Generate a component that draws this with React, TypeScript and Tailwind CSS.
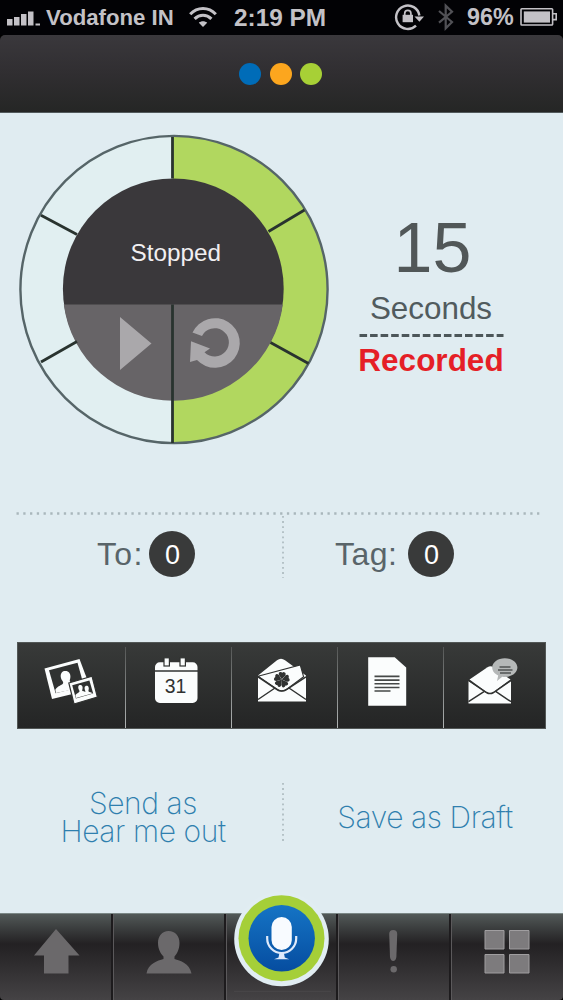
import type { ReactNode } from "react";

const FONT = "font-['Liberation_Sans',Arial,sans-serif]";
const THIN_FONT = "font-['Inter','Liberation_Sans',sans-serif] font-extralight";

export default function App() {
  return (
    <div
      className={`flex h-[1000px] w-[563px] flex-col overflow-hidden bg-black ${FONT}`}
    >
      <StatusBar />
      <Header />
      <main className="flex h-[800px] shrink-0 flex-col bg-[#e0ecf1]">
        <Recorder />
        <Recipients />
        <Attachments />
        <Actions />
      </main>
      <TabBar />
    </div>
  );
}

/* Status bar */

function StatusBar() {
  return (
    <div className="flex h-[35px] shrink-0 items-center whitespace-nowrap bg-[#020205] font-bold text-[#c3c1c6]">
      <svg className="ml-[7px] h-[35px] w-[34px]" viewBox="0 0 34 35" fill="currentColor">
        <rect x="0" y="19" width="5.5" height="6.5" />
        <rect x="7" y="17" width="5.5" height="8.5" />
        <rect x="14" y="14" width="5.5" height="11.5" />
        <rect x="21" y="11.5" width="5.5" height="14" />
        <rect x="28.5" y="23.5" width="4.5" height="2" />
      </svg>
      <span className="ml-[5px] w-[143px] text-[22.2px] leading-[35px]">Vodafone IN</span>
      <svg className="h-[35px] w-[28px]" viewBox="0 0 28 35" fill="none" stroke="currentColor" strokeWidth="3.1">
        <path d="M1.2 14.2C8.5 6.6 19.5 6.6 26.8 14.2" />
        <path d="M5.6 18.8C10.5 14 17.5 14 22.4 18.8" />
        <path d="M14 27l-4.2-4.3c2.4-2 6-2 8.4 0z" fill="currentColor" stroke="none" />
      </svg>
      <span className="ml-[17px] w-[160px] text-[24.4px] leading-[35px]">2:19 PM</span>
      <svg className="h-[35px] w-[31px]" viewBox="0 0 31 35" fill="none" stroke="currentColor" strokeWidth="2.4">
        <path d="M25.4 15.5A11.7 11.7 0 1 0 22 25.6" />
        <path d="M20.5 16.5h9.5l-4.6 5.2z" fill="currentColor" stroke="none" />
        <rect x="8.6" y="14.8" width="10.4" height="7.4" fill="currentColor" stroke="none" />
        <path d="M10.7 15.5v-2a3.1 3.1 0 0 1 6.2 0v2" strokeWidth="1.7" />
      </svg>
      <svg
        className="ml-[12px] h-[35px] w-[18px] text-[#515156]"
        viewBox="0 0 18 35"
        fill="none"
        stroke="currentColor"
        strokeWidth="2.2"
      >
        <path d="M2 11l13 11-6.3 6.3V5.7L15 11.8 2 22.6" />
      </svg>
      <span className="ml-[12px] w-[53px] text-[23.3px] leading-[35px]">96%</span>
      <svg className="h-[35px] w-[38px]" viewBox="0 0 38 35" fill="none" stroke="currentColor" strokeWidth="1.6">
        <rect x="1" y="8.8" width="31.6" height="16.2" rx="0.8" />
        <rect x="3.8" y="11.4" width="26.2" height="11.2" fill="currentColor" stroke="none" />
        <path d="M33 13.8h3.2v5.8H33" />
      </svg>
    </div>
  );
}

function Header() {
  return (
    <header className="flex h-[78px] shrink-0 items-center justify-center gap-[8.5px] rounded-t-[5px] border-b border-[#525a5c] bg-linear-to-b from-[#3a383c] via-[#302e31] to-[#252625] pr-[2px]">
      <i className="size-[22px] rounded-full bg-[#006cb8]" />
      <i className="size-[22px] rounded-full bg-[#fca61e]" />
      <i className="size-[22px] rounded-full bg-[#a7d036]" />
    </header>
  );
}

/* Dial and elapsed time */

function Recorder() {
  return (
    <section className="flex h-[398px] shrink-0 pt-3">
      <Dial />
      <div className="ml-[17px] mt-[80px] flex h-[180px] w-[148px] flex-col items-center">
        <span className="h-[84px] pl-[3px] text-[70px] leading-[86px] text-[#515758]">15</span>
        <span className="h-[38px] text-[31.4px] leading-[40px] text-[#515b5e]">Seconds</span>
        <svg className="mt-[6px] h-[5px] w-[145px]" viewBox="0 0 145 5">
          <path d="M0.5 2.5h144" stroke="#4c5659" strokeWidth="3" strokeDasharray="7.6 2.95" />
        </svg>
        <span className="text-[31.5px] leading-[44px] font-bold text-[#e51f27]">Recorded</span>
      </div>
    </section>
  );
}

function Dial() {
  return (
    <svg className="ml-[10px] size-[330px] shrink-0" viewBox="0 0 330 330">
      <circle cx="164" cy="164.5" r="153.8" fill="#e1eff1" />
      <path d="M162.5 10.7H164a153.8 153.8 0 0 1 0 307.6h-1.5z" fill="#b1d75f" />
      <circle cx="164" cy="164.5" r="153.6" fill="none" stroke="#566568" strokeWidth="2.4" />
      <circle cx="163.3" cy="163.8" r="110.4" fill="#3a383b" />
      <path d="M53.8 179.5h219a110.4 110.4 0 0 1-219 0z" fill="#676467" />
      <g stroke="#29332f" strokeWidth="2.8">
        <path d="M162.5 12v41.5M162.5 179.5v138.5" />
        <path d="M31 90.3l36 19.2M31 237l36-20.5M258.5 106.5l36-21.5M260.5 217.5l38 21" />
      </g>
      <text x="120.5" y="135.8" fontSize="24.3" fill="#f1eff1">
        Stopped
      </text>
      <path d="M110 192v53l31.5-26.5z" fill="#aaa8ab" />
      <path
        d="M182.5 207.5A24.8 24.8 0 1 1 187 235L180 237l1-20.8 19 7.4-5.5 3.6A14.2 14.2 0 1 0 192 211z"
        fill="#aaa8ab"
      />
    </svg>
  );
}

/* To / tag counters */

function Recipients() {
  return (
    <section className="flex h-[131px] shrink-0 flex-col px-4">
      <svg className="h-[5px] w-[530px] shrink-0" viewBox="0 0 530 5">
        <path d="M0.5 2.5h524" stroke="#a9b7bc" strokeWidth="2.4" strokeDasharray="2.3 4.46" />
      </svg>
      <div className="flex h-[66px]">
        <Counter label="To:" className="ml-[81px] w-[185px]" labelClass="w-[52px] tracking-[1.3px]" />
        <VerticalDots height={62} />
        <Counter label="Tag:" className="ml-[51px]" labelClass="w-[73px] tracking-[0.5px]" />
      </div>
    </section>
  );
}

function Counter({
  label,
  className,
  labelClass,
}: {
  label: string;
  className: string;
  labelClass: string;
}) {
  return (
    <div className={`flex items-center pt-[9px] ${className}`}>
      <span className={`text-[32px] leading-[46px] text-[#596469] ${labelClass}`}>{label}</span>
      <span className="flex size-[46px] items-center justify-center rounded-full bg-[#393a3a] pt-[3px] pl-px text-[27px] leading-none text-white">
        0
      </span>
    </div>
  );
}

function VerticalDots({ height }: { height: number }) {
  return (
    <svg className="w-[2px] shrink-0" height={height} viewBox={`0 0 2 ${height}`}>
      <path d={`M1 0v${height}`} stroke="#acbabf" strokeWidth="1.7" strokeDasharray="1.8 3.3" />
    </svg>
  );
}

/* Attachment toolbar */

function Attachments() {
  const icons = [PhotosIcon, CalendarIcon, CardIcon, NoteIcon, MessageIcon];
  return (
    <section className="ml-[17px] flex h-[87px] w-[529px] shrink-0 border border-[#525756] bg-linear-to-b from-[#383a39] to-[#242525]">
      {icons.map((Icon, i) => (
        <div key={i} className="flex w-[106px] shrink-0">
          <Icon />
          {i < icons.length - 1 && (
            <span className="mt-1 -mr-[2px] ml-px w-px shrink-0 bg-linear-to-b from-[#555756] to-[#b0b4b4]" />
          )}
        </div>
      ))}
    </section>
  );
}

function ToolIcon({ children }: { children: ReactNode }) {
  return (
    <svg className="h-[85px] w-[106px] shrink-0" viewBox="0 0 106 85" fill="#fbfdfd">
      {children}
    </svg>
  );
}

function PhotosIcon() {
  return (
    <ToolIcon>
      <path d="M26.5 25.4L61.5 16 73 46.4 34 56z" />
      <path d="M31 27.3L59.5 19.7 66 43.2 37.6 50.2z" fill="#303231" />
      <path d="M38 50l-.7-3.2c2.2-3.7 6.3-4.4 7.7-6.2.6-1.2-.2-2.3-1.5-4.2-1.6-3.2-.8-7.3 2.5-8.3 4-1 6.8 2 6.4 6-.1 2.1-1 3.2-.5 4.4 1 1.8 6.3 1.4 9.4 4l1 2.6z" />
      <path d="M50.8 40L74 33.2 79.4 54 56 61z" stroke="#303231" strokeWidth="1.2" />
      <path d="M54.2 42.3l17.2-4.7 3.8 12.9-17.3 5z" fill="#303231" />
      <path d="M58 55l-.6-3c1.8-2 3.6-2.5 4.1-3.5.2-1-1.8-2.7-1.2-5 .6-2 3.6-2 4.2.2.5 1.8-.6 3.3-.2 4.2 1 0 2 .5 3 1 .5-.8-1-2.5-.7-4.5.4-2 3.3-2.2 4-.2.7 1.8-.6 3.3 0 4.2.8.6 2.8.7 4.4 1.8z" />
    </ToolIcon>
  );
}

function CalendarIcon() {
  return (
    <ToolIcon>
      <path d="M31 27.3v-3.2a4.8 4.8 0 0 1 4.8-4.8h32.9a4.8 4.8 0 0 1 4.8 4.8v3.2zM31 28.7h42.5v26.5a4.8 4.8 0 0 1-4.8 4.8H35.8a4.8 4.8 0 0 1-4.8-4.8z" />
      <g stroke="#303231" strokeWidth="1.2">
        <rect x="40" y="14.8" width="5.4" height="8.2" />
        <rect x="56" y="14.8" width="5.4" height="8.2" />
      </g>
      <text x="51.5" y="49.7" fontSize="19.4" textAnchor="middle" fill="#303231">
        31
      </text>
    </ToolIcon>
  );
}

function CardIcon() {
  return (
    <ToolIcon>
      <path d="M28 32.5L47 17.3q4-3 8 0L76 32.5v26H28z" />
      <path d="M28 33.2L70.3 22l3.3 11.8-17.1 12.7q-5 3-9 0z" stroke="#303231" strokeWidth="1.1" />
      <path
        d="M28 33.8l17.5 11.9q6 4.8 12.5 0L76 33.8M28 56.5L45 45M76 56.5L59 45"
        fill="none"
        stroke="#303231"
        strokeWidth="1.5"
      />
      <g fill="#303231" transform="translate(51.8 36.6)">
        {[0, 72, 144, 216, 288].map((angle) => (
          <path
            key={angle}
            transform={`rotate(${angle + 4})`}
            d="M0-.3L-3.2-4.4q-1-3.2 1.6-3.2 1 0 1.6.7.6-.7 1.6-.7 2.6 0 1.6 3.2z"
          />
        ))}
        <path d="M-.6 0l1.2-.5 1.8 8-1.5.3z" />
      </g>
    </ToolIcon>
  );
}

function NoteIcon() {
  return (
    <ToolIcon>
      <path d="M32.2 14.3h26.5l11.5 10.2v38.3h-38z" />
      <path
        d="M38.5 33.4h25M38.5 37.1h25M38.5 40.8h25M38.5 44.5h25M38.5 48h16"
        stroke="#454847"
        strokeWidth="1.6"
      />
    </ToolIcon>
  );
}

function MessageIcon() {
  return (
    <ToolIcon>
      <path d="M26.5 38v22.6H69V38L51 49.5q-3.7 2-7 0z" />
      <path d="M27.5 36.5l18-12.3q3-1.8 6 0l17 12.3-17.3 12.8q-3.2 2-6.3 0z" />
      <path
        d="M26.5 37.5L44.5 49.5q3.5 2.2 7 0L69 37.5M26.5 58.7L42 48.7M69 58.7L54 48.7"
        fill="none"
        stroke="#303231"
        strokeWidth="1.5"
      />
      <path
        d="M62.8 15.2c7 0 12.6 4.2 12.6 9.4S69.8 34 62.8 34q-1.3 0-2.5-.2L55 38l1.2-5.4c-3.5-1.6-6-4.5-6-8 0-5.2 5.6-9.4 12.6-9.4z"
        fill="#b5b8b8"
      />
      <path d="M57.5 24h11M56 27h14.5M58 30h11" stroke="#505353" strokeWidth="1.5" />
    </ToolIcon>
  );
}

/* Send / save */

function Actions() {
  return (
    <section className="flex h-[184px] shrink-0 items-start pt-[54px]">
      <button
        className={`mt-[6px] ml-[42px] w-[202px] text-center text-[30px] leading-[28px] tracking-[-0.4px] text-[#2f7fae] ${THIN_FONT}`}
      >
        Send as
        <br />
        Hear me out
      </button>
      <span className="ml-[38px] flex">
        <VerticalDots height={60} />
      </span>
      <button
        className={`mt-[20px] ml-[40px] w-[202px] text-center text-[30px] leading-[28px] tracking-[-0.4px] text-[#2f7fae] ${THIN_FONT}`}
      >
        Save as Draft
      </button>
    </section>
  );
}

/* Bottom tabs */

function TabBar() {
  return (
    <nav className="relative flex h-[87px] shrink-0 rounded-b-[4px] border-t border-[#7b8786] bg-linear-to-b from-[#525958] via-[#232123] via-35% to-[#454345]">
      <Tab className="w-[114px]">
        <path d="M56 15L79.5 41.5H68.5V59.5H44V41.5H34z" />
      </Tab>
      <Tab className="w-[113px]">
        <path d="M54.5 17c7 0 11 5.2 11 12 0 5.8-2.2 10.5-5 13.5v2.5c5.5 1.8 15 4 17 14.5H32.5c1.6-10 11-12.7 17-14.5v-2.5c-3-3-5.5-7.7-5.5-13.5 0-6.8 4-12 10.5-12z" />
      </Tab>
      <Tab className="w-[112px]">
        <path d="M7 78h98" stroke="#4a484a" />
      </Tab>
      <Tab className="w-[113px]">
        <path d="M50.2 20q0-4 4-4t4 4l-.8 23q-.7 4-3.2 4t-3.2-4z" />
        <circle cx="54.7" cy="55.3" r="3.2" />
      </Tab>
      <Tab className="w-[111px]" last>
        <path
          d="M33 16.5h19v18.5H33zM57.5 16.5H77v18.5H57.5zM33 40.5h19v18.5H33zM57.5 40.5H77v18.5H57.5z"
          fill="#7d7b7d"
          stroke="#a09ea0"
        />
      </Tab>
      <svg className="absolute -top-[22px] left-[233px] h-[96px] w-[97px]" viewBox="0 0 97 96">
        <defs>
          <linearGradient id="mic" x1="0" y1="0" x2="0" y2="1">
            <stop offset="0" stopColor="#1574c5" />
            <stop offset="1" stopColor="#064da0" />
          </linearGradient>
        </defs>
        <circle cx="48.5" cy="47" r="47.3" fill="#e1edf2" />
        <circle cx="48.5" cy="46.3" r="43" fill="#a5cf38" />
        <circle cx="48.7" cy="46.3" r="33.2" fill="url(#mic)" />
        <rect x="38.5" y="25" width="20.3" height="33" rx="10.1" fill="#f8fbff" />
        <path d="M34.2 44v2.5a14.5 14.5 0 0 0 29 0V44" fill="none" stroke="#dfeafb" strokeWidth="2.2" />
        <path d="M46.5 60.5h4.3l1 5 4.4 1.7H41l4.5-1.7z" fill="#dfeafb" />
      </svg>
    </nav>
  );
}

function Tab({
  children,
  className,
  last,
}: {
  children: ReactNode;
  className: string;
  last?: boolean;
}) {
  return (
    <div className={`flex shrink-0 ${className}`}>
      <svg className="h-[86px] min-w-0 flex-1" viewBox="0 0 110 86" preserveAspectRatio="xMinYMin" fill="#6b696b">
        {children}
      </svg>
      {!last && <span className="w-[3px] border-r border-[#5b595b] bg-[#1d1b1d]" />}
    </div>
  );
}
